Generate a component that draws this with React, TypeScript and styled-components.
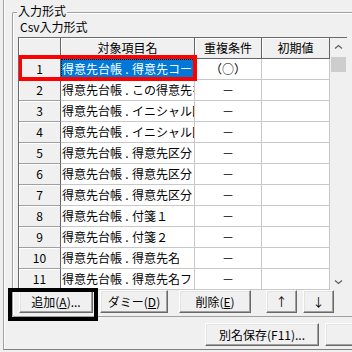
import React from 'react';
import styled, { createGlobalStyle } from 'styled-components';

const GlobalStyle = createGlobalStyle`
  html, body {
    margin: 0;
    padding: 0;
    background: #f0f0f0;
    overflow: hidden;
  }
  body {
    font-family: "Noto Sans CJK JP", "Noto Sans", sans-serif;
    font-size: 12px;
    color: #000;
  }
`;

const Screen = styled.div`
  width: 352px;
  height: 352px;
  overflow: hidden;
  box-sizing: border-box;
  padding-left: 3px;
  background: #f0f0f0;
`;

const Frame = styled.div`
  height: 350px;
  box-sizing: border-box;
  border-left: 1px solid #a0a0a0;
  border-bottom: 1px solid #808080;
  box-shadow: inset 1px 0 #fff;
  padding: 12px 0 0 8px;
  display: flex;
  flex-direction: column;
`;

const Group = styled.div`
  position: relative;
  width: 360px;
  height: 305px;
  box-sizing: border-box;
  border: 1px solid #a0a0a0;
  border-right: none;
  border-radius: 2px 0 0 2px;
  box-shadow: inset 1px 1px #fff;
  padding: 6px 0 0 5px;
`;

const Legend = styled.span`
  position: absolute;
  left: 4px;
  top: -9px;
  padding: 0 1px;
  line-height: 14px;
  background: #f0f0f0;
`;

const SubLabel = styled.div`
  margin: 0 0 2px 2px;
  line-height: 16px;
  height: 16px;
`;

const Grid = styled.div`
  position: relative;
  display: flex;
  width: 329px;
  height: 253px;
  box-sizing: border-box;
  border-left: 1px solid #696969;
  border-top: 1px solid #696969;
  overflow: hidden;
`;

const Table = styled.div`
  display: grid;
  grid-template-columns: 42px 134px 67px 68px;
  grid-auto-rows: 21px;
  align-content: start;
  width: 311px;
  background: #fff;
`;

const HeaderCell = styled.div`
  box-sizing: border-box;
  background: #f0f0f0;
  border-right: 1px solid #646464;
  border-bottom: 1px solid #646464;
  box-shadow: inset 1px 1px #fff;
  text-align: center;
  line-height: 20px;
  white-space: nowrap;
  overflow: hidden;
`;

const RowHead = styled.div`
  box-sizing: border-box;
  background: #f0f0f0;
  border-right: 1px solid #646464;
  border-bottom: 1px solid #a0a0a0;
  box-shadow: inset 1px 1px #fff;
  text-align: center;
  line-height: 20px;
`;

const Cell = styled.div<{ $center?: boolean; $selected?: boolean }>`
  position: relative;
  box-sizing: border-box;
  background: ${p => (p.$selected ? '#0078d7' : '#fff')};
  color: ${p => (p.$selected ? '#fff' : '#000')};
  border-right: 1px solid #c8c8c8;
  border-bottom: 1px solid #c8c8c8;
  text-align: ${p => (p.$center ? 'center' : 'left')};
  padding-left: ${p => (p.$center ? 0 : 1)}px;
  line-height: 20px;
  white-space: nowrap;
  overflow: hidden;
  outline: ${p => (p.$selected ? '1px dotted #000' : 'none')};
  outline-offset: -1px;
`;

// half-width period is wider in the original UI font
const Dot = styled.span`
  display: inline-block;
  width: 10px;
  text-align: center;
`;

const ScrollBar = styled.div`
  width: 17px;
  display: flex;
  flex-direction: column;
  background: #f0f0f0;
`;

const ArrowBox = styled.div`
  height: 17px;
  flex: none;
  display: flex;
  align-items: center;
  justify-content: center;
`;

const Thumb = styled.div`
  margin: 2px 1px 0;
  height: 15px;
  background: #cdcdcd;
`;

const Track = styled.div`
  flex: 1;
`;

const RedMark = styled.div`
  position: absolute;
  left: -1px;
  top: 17px;
  width: 179px;
  height: 26px;
  box-sizing: border-box;
  border: 4px solid #f00;
  pointer-events: none;
`;

const ButtonRow = styled.div`
  position: relative;
  display: flex;
  height: 23px;
`;

const BlackMark = styled.div`
  position: absolute;
  left: -10px;
  top: -2px;
  width: 90px;
  height: 33px;
  box-sizing: border-box;
  border: 4px solid #000;
  pointer-events: none;
`;

const Button = styled.button<{ $ml?: number; $w: number }>`
  flex: none;
  margin-left: ${p => p.$ml ?? 0}px;
  width: ${p => p.$w}px;
  height: 23px;
  padding: 0;
  font: inherit;
  font-size: 12px;
  line-height: 21px;
  color: #000;
  background: #f0f0f0;
  border: 1px solid;
  border-color: #fff #696969 #696969 #fff;
  box-shadow: inset -1px -1px #a0a0a0, inset 1px 1px #e3e3e3;
  white-space: nowrap;
  overflow: hidden;
`;

const Key = styled.span`
  text-decoration: underline;
`;

const BottomRow = styled.div`
  display: flex;
  margin-top: 6px;
  height: 23px;
`;

const Chevron: React.FC<{ down?: boolean }> = ({ down }) => (
  <svg width="9" height="6" viewBox="0 0 9 6">
    <path
      d={down ? 'M1 1.5 L4.5 4.5 L8 1.5' : 'M1 4.5 L4.5 1.5 L8 4.5'}
      fill="none"
      stroke="#606060"
      strokeWidth="1.3"
    />
  </svg>
);

const fields = [
  '得意先コード',
  'この得意先を使用',
  'イニシャル区分',
  'イニシャル区分２',
  '得意先区分',
  '得意先区分１',
  '得意先区分２',
  '付箋１',
  '付箋２',
  '得意先名',
  '得意先名フリガナ',
];

const App: React.FC = () => {
  return (
    <Screen>
      <GlobalStyle />
      <Frame>
        <Group>
          <Legend>入力形式</Legend>
          <SubLabel>Csv入力形式</SubLabel>
          <Grid>
            <Table>
              <HeaderCell />
              <HeaderCell>対象項目名</HeaderCell>
              <HeaderCell>重複条件</HeaderCell>
              <HeaderCell>初期値</HeaderCell>
              {fields.map((field, i) => (
                <React.Fragment key={i}>
                  <RowHead>{i + 1}</RowHead>
                  <Cell $selected={i === 0}>
                    得意先台帳<Dot>.</Dot>
                    {field}
                  </Cell>
                  <Cell $center>{i === 0 ? '（○）' : '－'}</Cell>
                  <Cell />
                </React.Fragment>
              ))}
            </Table>
            <ScrollBar>
              <ArrowBox>
                <Chevron />
              </ArrowBox>
              <Thumb />
              <Track />
              <ArrowBox>
                <Chevron down />
              </ArrowBox>
            </ScrollBar>
            <RedMark />
          </Grid>
          <ButtonRow>
            <Button $ml={1} $w={74}>
              追加(<Key>A</Key>)...
            </Button>
            <Button $ml={7} $w={68}>
              ダミー(<Key>D</Key>)
            </Button>
            <Button $ml={11} $w={72}>
              削除(<Key>E</Key>)
            </Button>
            <Button $ml={15} $w={31}>
              ↑
            </Button>
            <Button $ml={6} $w={31}>
              ↓
            </Button>
            <BlackMark />
          </ButtonRow>
        </Group>
        <BottomRow>
          <Button $ml={193} $w={114}>
            別名保存(F11)...
          </Button>
          <Button $ml={6} $w={80} />
        </BottomRow>
      </Frame>
    </Screen>
  );
};

export default App;
